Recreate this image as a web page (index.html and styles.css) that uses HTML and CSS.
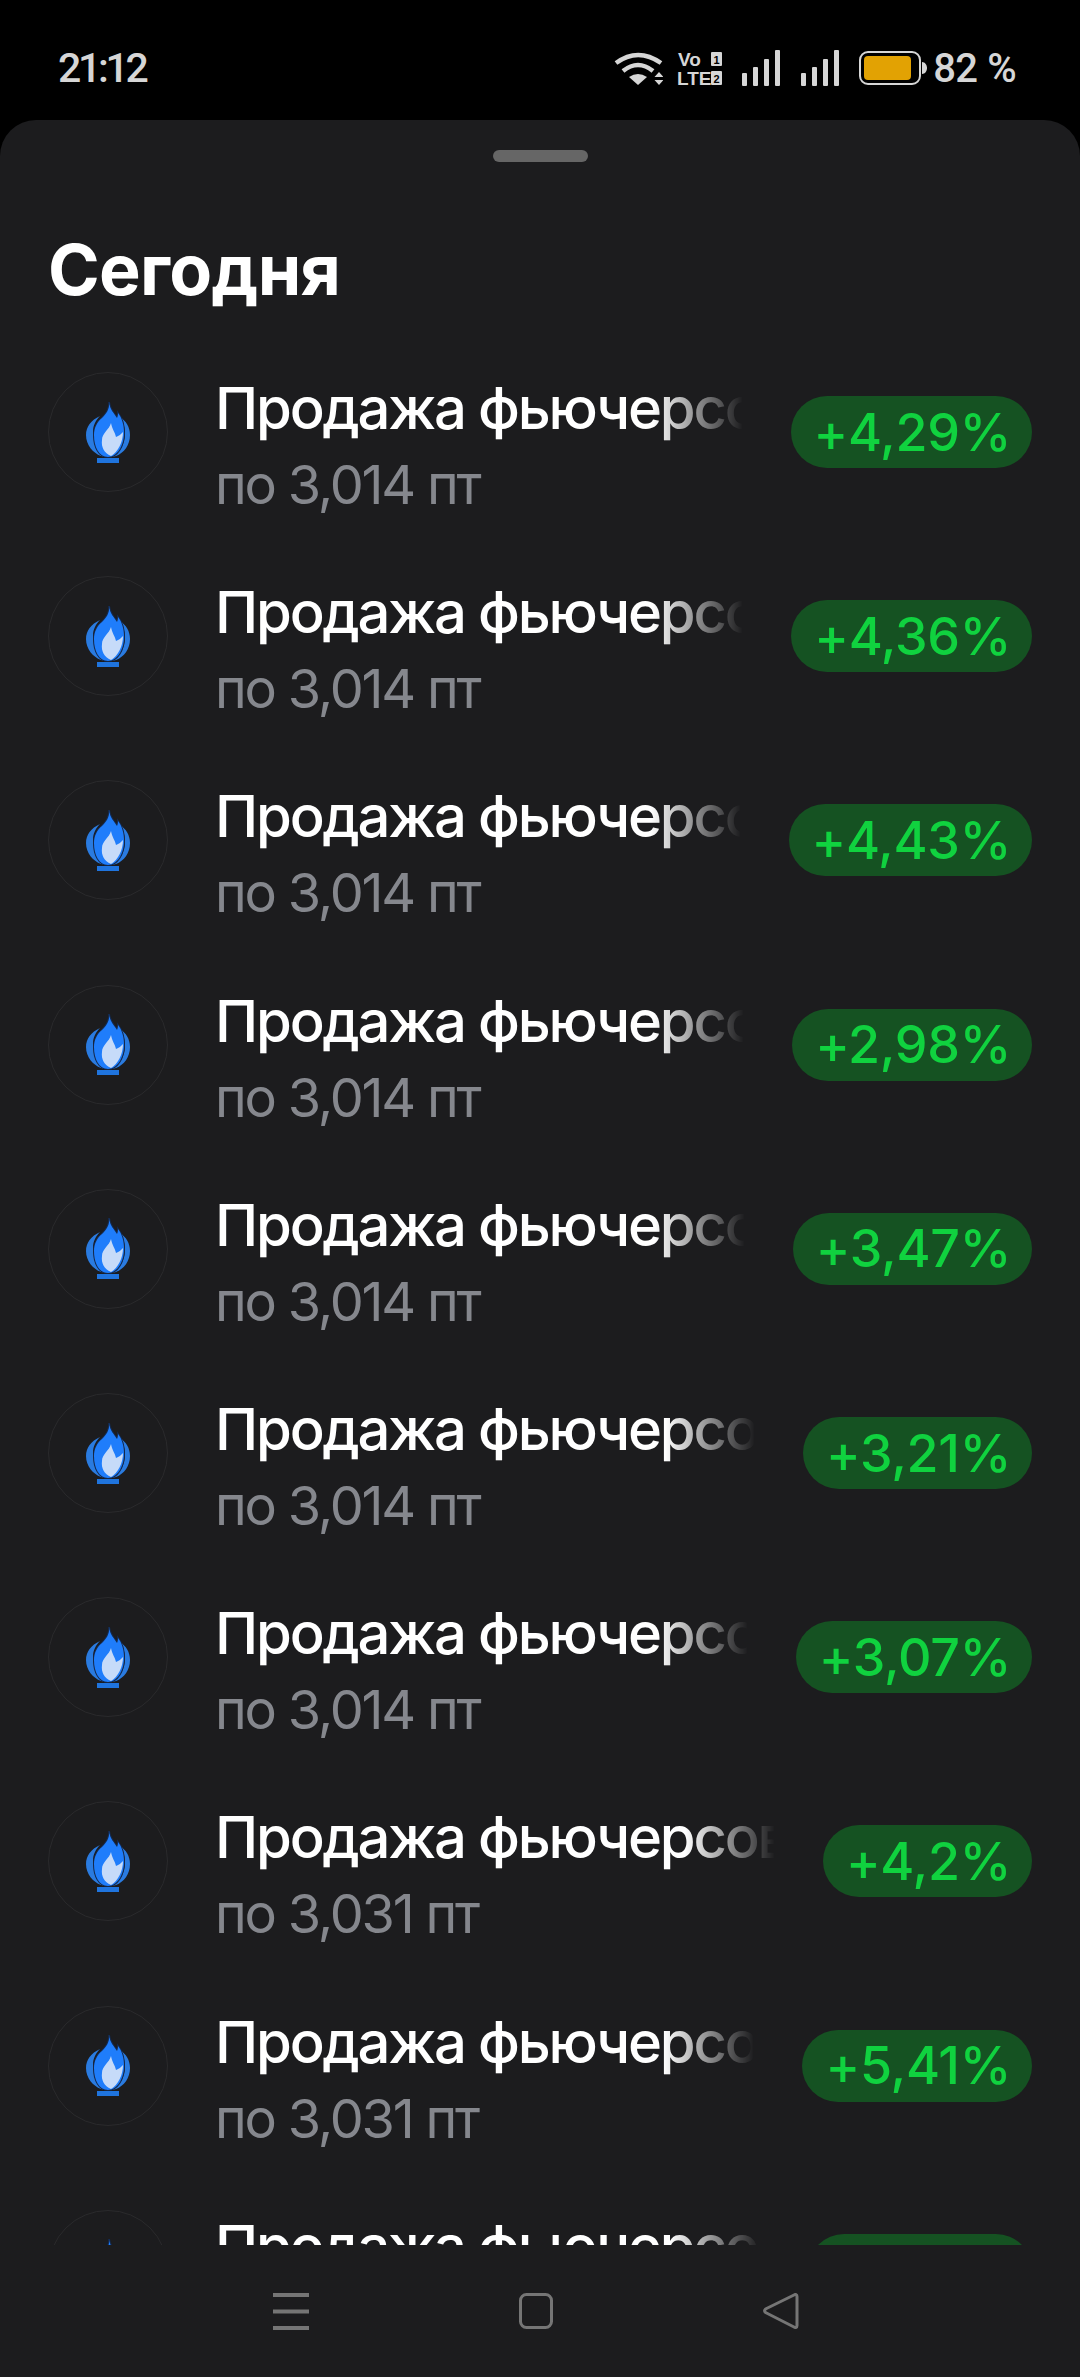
FILE: index.html
```html
<!DOCTYPE html>
<html lang="ru">
<head>
    <meta charset="UTF-8">
    <meta name="viewport" content="width=device-width, initial-scale=1.0">
    <title>Сегодня</title>
    <link rel="stylesheet" href="styles.css">
</head>
<body>
    <svg class="sprite" width="0" height="0">
        <symbol id="flame" viewBox="0 0 44 61">
            <path fill="#2a7be0" d="M14 14C5 18 0 25 0 33c0 10 7 18 15 21l5 1C12 48 7 39 7 30c0-7 3-12 7-16z"/>
            <path fill="#2a7be0" d="M34 15c6 4 10 10 10 18 0 10-6 18-14 21l-4 1c8-4 13-13 13-24 0-6-2-11-5-16z"/>
            <path fill="#14294d" stroke="#14294d" stroke-width="2" d="M23 0c1 8 5 11 8 16 1-2 1-4 1-5 4 5 6 12 6 20 0 13-7 24-16 24-9 0-14-10-14-22 0-7 3-13 8-17 4-4 8-9 7-16z"/>
            <path fill="#1f7dfb" d="M23 0c1 8 5 11 8 16 1-2 1-4 1-5 4 5 6 12 6 20 0 13-7 24-16 24-9 0-14-10-14-22 0-7 3-13 8-17 4-4 8-9 7-16z"/>
            <path fill="#c6dbf9" d="M25 21c1 6 4 9 5 14 3-1 5-3 7-5 0 10-5 20-12 24-7-3-10-9-9-16 0-7 7-10 9-17z"/>
            <rect fill="#1f74de" x="11" y="56" width="22" height="5"/>
        </symbol>
    </svg>

    <header class="status-bar">
        <span class="time">21:12</span>
        <div class="status-icons">
            <svg class="icon-wifi" width="49" height="34" viewBox="0 0 49 34">
                <path fill="none" stroke="#d6d6d6" stroke-width="4.500" d="M2 12Q24-4 47 12"/>
                <path fill="none" stroke="#d6d6d6" stroke-width="4.500" d="M9 20Q24 8 39 20"/>
                <path fill="#d6d6d6" d="M15 26Q24 20 33 26L24 34z"/>
                <path fill="#d6d6d6" d="M45 21l4.500 5h-9zM45 34l4.500-5h-9z"/>
            </svg>
            <svg class="icon-volte" width="46" height="36" viewBox="0 0 46 36">
                <text class="volte-text" x="1" y="16">Vo</text>
                <text class="volte-text" x="0" y="35">LTE</text>
                <rect fill="#d6d6d6" x="34" y="2" width="11" height="14" rx="1"/>
                <rect fill="#d6d6d6" x="34" y="21" width="11" height="14" rx="1"/>
                <text class="sim-text" x="39.500" y="13.500">1</text>
                <text class="sim-text" x="39.500" y="32.500">2</text>
            </svg>
            <svg class="icon-signal" width="38" height="36" viewBox="0 0 38 36">
                <rect fill="#d6d6d6" x="0" y="23" width="5" height="13" rx="1"/>
                <rect fill="#d6d6d6" x="11" y="17" width="5" height="19" rx="1"/>
                <rect fill="#d6d6d6" x="22" y="9" width="5" height="27" rx="1"/>
                <rect fill="#d6d6d6" x="33" y="0" width="5" height="36" rx="1"/>
            </svg>
            <svg class="icon-signal" width="38" height="36" viewBox="0 0 38 36">
                <rect fill="#d6d6d6" x="0" y="23" width="5" height="13" rx="1"/>
                <rect fill="#d6d6d6" x="11" y="17" width="5" height="19" rx="1"/>
                <rect fill="#d6d6d6" x="22" y="9" width="5" height="27" rx="1"/>
                <rect fill="#d6d6d6" x="33" y="0" width="5" height="36" rx="1"/>
            </svg>
            <svg class="icon-battery" width="68" height="34" viewBox="0 0 68 34">
                <rect fill="none" stroke="#d6d6d6" stroke-width="2" x="1" y="1" width="60" height="32" rx="8"/>
                <rect fill="#e2a203" x="5" y="5" width="47" height="24" rx="4"/>
                <path fill="#d6d6d6" d="M63 11c3 0 5 3 5 6s-2 6-5 6z"/>
            </svg>
            <span class="battery-text">82 %</span>
        </div>
    </header>

    <main class="sheet">
        <div class="handle"></div>
        <h1>Сегодня</h1>
        <div class="list">
            <div class="row">
                <div class="logo"><svg width="44" height="61"><use href="#flame"/></svg></div>
                <div class="info"><div class="name">Продажа фьючерсов на природный газ</div><div class="sub">по 3,014 пт</div></div>
                <div class="pill">+4,29%</div>
            </div>
            <div class="row">
                <div class="logo"><svg width="44" height="61"><use href="#flame"/></svg></div>
                <div class="info"><div class="name">Продажа фьючерсов на природный газ</div><div class="sub">по 3,014 пт</div></div>
                <div class="pill">+4,36%</div>
            </div>
            <div class="row">
                <div class="logo"><svg width="44" height="61"><use href="#flame"/></svg></div>
                <div class="info"><div class="name">Продажа фьючерсов на природный газ</div><div class="sub">по 3,014 пт</div></div>
                <div class="pill">+4,43%</div>
            </div>
            <div class="row">
                <div class="logo"><svg width="44" height="61"><use href="#flame"/></svg></div>
                <div class="info"><div class="name">Продажа фьючерсов на природный газ</div><div class="sub">по 3,014 пт</div></div>
                <div class="pill">+2,98%</div>
            </div>
            <div class="row">
                <div class="logo"><svg width="44" height="61"><use href="#flame"/></svg></div>
                <div class="info"><div class="name">Продажа фьючерсов на природный газ</div><div class="sub">по 3,014 пт</div></div>
                <div class="pill">+3,47%</div>
            </div>
            <div class="row">
                <div class="logo"><svg width="44" height="61"><use href="#flame"/></svg></div>
                <div class="info"><div class="name">Продажа фьючерсов на природный газ</div><div class="sub">по 3,014 пт</div></div>
                <div class="pill">+3,21%</div>
            </div>
            <div class="row">
                <div class="logo"><svg width="44" height="61"><use href="#flame"/></svg></div>
                <div class="info"><div class="name">Продажа фьючерсов на природный газ</div><div class="sub">по 3,014 пт</div></div>
                <div class="pill">+3,07%</div>
            </div>
            <div class="row">
                <div class="logo"><svg width="44" height="61"><use href="#flame"/></svg></div>
                <div class="info"><div class="name">Продажа фьючерсов на природный газ</div><div class="sub">по 3,031 пт</div></div>
                <div class="pill">+4,2%</div>
            </div>
            <div class="row">
                <div class="logo"><svg width="44" height="61"><use href="#flame"/></svg></div>
                <div class="info"><div class="name">Продажа фьючерсов на природный газ</div><div class="sub">по 3,031 пт</div></div>
                <div class="pill">+5,41%</div>
            </div>
            <div class="row">
                <div class="logo"><svg width="44" height="61"><use href="#flame"/></svg></div>
                <div class="info"><div class="name">Продажа фьючерсов на природный газ</div><div class="sub">по 3,031 пт</div></div>
                <div class="pill">+5,12%</div>
            </div>
        </div>
        <nav class="nav-bar">
            <svg width="36" height="37" viewBox="0 0 36 37">
                <path fill="none" stroke="#757575" stroke-width="4" d="M0 2h36M0 18.500h36M0 35h36"/>
            </svg>
            <svg width="34" height="36" viewBox="0 0 34 36">
                <rect fill="none" stroke="#757575" stroke-width="3" x="1.500" y="1.500" width="31" height="33" rx="6"/>
            </svg>
            <svg width="36" height="36" viewBox="0 0 36 36">
                <path fill="none" stroke="#757575" stroke-width="3" stroke-linejoin="round" d="M34 3.500c0-2-1.500-2.500-3-1.500L2.500 16c-1 1-1 2.500 0 3.500L31 34c1.500 1 3 .5 3-1.500z"/>
            </svg>
        </nav>
    </main>
</body>
</html>
```

FILE: styles.css
```css
* {
    box-sizing: border-box;
}
html, body {
    margin: 0;
    height: 2377px;
    overflow: hidden;
    background: #000;
}
body {
    display: flex;
    flex-direction: column;
    font-family: Inter, "Noto Sans", sans-serif;
}
.sprite {
    position: absolute;
}
.status-bar {
    height: 120px;
    flex: none;
    display: flex;
    align-items: center;
    justify-content: space-between;
    padding: 16px 64px 0 58px;
    color: #d6d6d6;
    font-family: Roboto, sans-serif;
    font-weight: 500;
}
.time {
    font-size: 41px;
    letter-spacing: -3.3px;
}
.status-icons {
    display: flex;
    align-items: center;
}
.icon-volte {
    margin-left: 14px;
}
.icon-signal {
    margin-left: 19px;
}
.icon-signal + .icon-signal {
    margin-left: 21px;
}
.icon-battery {
    margin-left: 20px;
}
.battery-text {
    font-size: 40px;
    letter-spacing: -0.8px;
    word-spacing: 1px;
    margin-left: 6px;
}
.volte-text {
    font: 700 19px "Liberation Sans", sans-serif;
    fill: #d6d6d6;
}
.sim-text {
    font: 700 11px "Liberation Sans", sans-serif;
    fill: #000;
    text-anchor: middle;
}
.sheet {
    flex: 1;
    min-height: 0;
    display: flex;
    flex-direction: column;
    background: #1c1c1e;
    border-radius: 36px 36px 0 0;
}
.handle {
    flex: none;
    width: 95px;
    height: 12px;
    margin: 30px auto 0;
    background: #666;
    border-radius: 6px;
}
h1 {
    flex: none;
    margin: 67px 48px 19px;
    color: #fff;
    font-size: 70px;
    letter-spacing: -0.7px;
    line-height: 82px;
    font-weight: 700;
}
.list {
    flex: 1;
    min-height: 0;
    overflow: hidden;
}
.row {
    height: 204.2px;
    display: flex;
    align-items: center;
    padding: 0 48px;
}
.logo {
    flex: none;
    width: 120px;
    height: 120px;
    display: flex;
    align-items: center;
    justify-content: center;
    border: 1px solid #2a2a2c;
    border-radius: 50%;
    margin-right: 47px;
}
.info {
    flex: 1;
    min-width: 0;
    margin-right: 48px;
    padding-top: 24px;
}
.name {
    color: #fff;
    font-size: 58px;
    font-weight: 500;
    letter-spacing: -2.2px;
    line-height: 72px;
    white-space: nowrap;
    overflow: hidden;
    -webkit-mask-image: linear-gradient(to right, #000 calc(100% - 90px), transparent);
    mask-image: linear-gradient(to right, #000 calc(100% - 90px), transparent);
}
.sub {
    color: #85878d;
    font-size: 54px;
    letter-spacing: -2.2px;
    line-height: 62px;
    margin-top: 10px;
}
.pill {
    flex: none;
    height: 72px;
    padding: 0 21px 0 23px;
    display: flex;
    align-items: center;
    color: #10d23f;
    background: #155222;
    border-radius: 36px;
    font-size: 52px;
    letter-spacing: -0.3px;
    font-weight: 500;
}
.nav-bar {
    flex: none;
    height: 132px;
    display: flex;
    align-items: center;
    justify-content: space-between;
    padding: 0 281px 0 273px;
}
```
